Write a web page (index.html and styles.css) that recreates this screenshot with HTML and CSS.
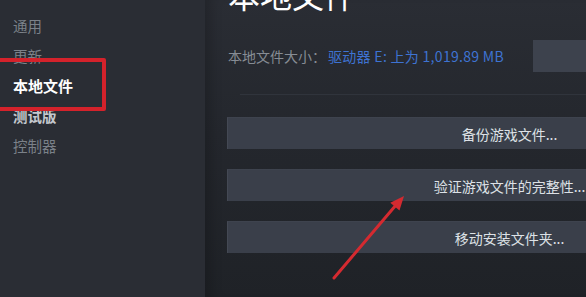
FILE: index.html
```html
<!DOCTYPE html>
<html lang="zh-CN">
<head>
<meta charset="utf-8">
<title>本地文件</title>
<link rel="stylesheet" href="styles.css">
</head>
<body>
<div class="app">
  <nav class="sidebar">
    <div class="nav-item">通用</div>
    <div class="nav-item">更新</div>
    <div class="nav-item active">本地文件</div>
    <div class="nav-item beta">测试版</div>
    <div class="nav-item">控制器</div>
    <div class="highlight"></div>
  </nav>
  <main class="content">
    <h1 class="title">本地文件</h1>
    <div class="size-row">
      <span class="size-label">本地文件大小：</span>
      <span class="size-value">驱动器 E: 上为 1,019.89 MB</span>
      <span class="browse-btn"></span>
    </div>
    <div class="separator"></div>
    <div class="actions">
      <div class="action">备份游戏文件...</div>
      <div class="action">验证游戏文件的完整性...</div>
      <div class="action">移动安装文件夹...</div>
    </div>
  </main>
  <svg class="arrow" width="586" height="297" viewBox="0 0 586 297">
    <line x1="334" y1="278" x2="396" y2="205" stroke="#d42a30" stroke-width="3" stroke-linecap="round"/>
    <polygon points="404,196 399.5,210.5 390.3,202.8" fill="#d42a30"/>
  </svg>
</div>
</body>
</html>
```

FILE: styles.css
```css
html, body {
  margin: 0;
  padding: 0;
  width: 586px;
  height: 297px;
  overflow: hidden;
  background: #22252b;
  font-family: "Noto Sans CJK SC", "Noto Sans", "Liberation Sans", sans-serif;
}

.app {
  position: relative;
  display: flex;
  width: 586px;
  height: 297px;
  overflow: hidden;
}

.sidebar {
  position: relative;
  flex: 0 0 205px;
  padding-top: 11px;
  padding-left: 13px;
  box-sizing: border-box;
  background: #2a2d34;
}

.nav-item {
  height: 30px;
  line-height: 30px;
  font-size: 14.5px;
  color: #7b8189;
}

.nav-item.active {
  color: #ffffff;
  font-weight: 700;
  font-size: 15px;
}

.nav-item.beta {
  color: #c4c8ce;
  font-weight: 700;
}

.highlight {
  position: absolute;
  left: -6px;
  top: 58px;
  width: 104px;
  height: 45px;
  border: 4px solid #d4222b;
  border-radius: 2px;
}

.content {
  flex: 1;
  min-width: 0;
  padding-left: 22px;
  background: linear-gradient(180deg, #2a2d34 0%, #24272d 45%, #1f2227 100%);
  box-shadow: inset 14px 0 12px -8px rgba(0, 0, 0, 0.18);
}

.title {
  margin: -22px 0 0 1px;
  height: 32px;
  line-height: 32px;
  font-size: 32px;
  font-weight: 400;
  color: #ffffff;
  white-space: nowrap;
}

.size-row {
  display: flex;
  align-items: center;
  height: 32px;
  margin-top: 30px;
  font-size: 14px;
  white-space: nowrap;
}

.size-label {
  margin-left: 1px;
  width: 100px;
  color: #868c94;
}

.size-value {
  color: #3e73d2;
  letter-spacing: 0.3px;
}

.browse-btn {
  margin-left: auto;
  width: 53px;
  height: 32px;
  background: #3d424d;
  flex: 0 0 auto;
}

.separator {
  height: 1px;
  margin: 22px 0 0 13px;
  background: #30343c;
}

.actions {
  display: flex;
  flex-direction: column;
  gap: 20px;
  margin-top: 22px;
}

.action {
  width: 564px;
  height: 32px;
  line-height: 32px;
  box-sizing: border-box;
  text-align: center;
  font-size: 14px;
  color: #dde1e6;
  background: #3a3f4a;
  border-left: 1px solid #444954;
  border-top: 1px solid #3e434e;
  white-space: nowrap;
}

.arrow {
  position: absolute;
  left: 0;
  top: 0;
  pointer-events: none;
}
```
